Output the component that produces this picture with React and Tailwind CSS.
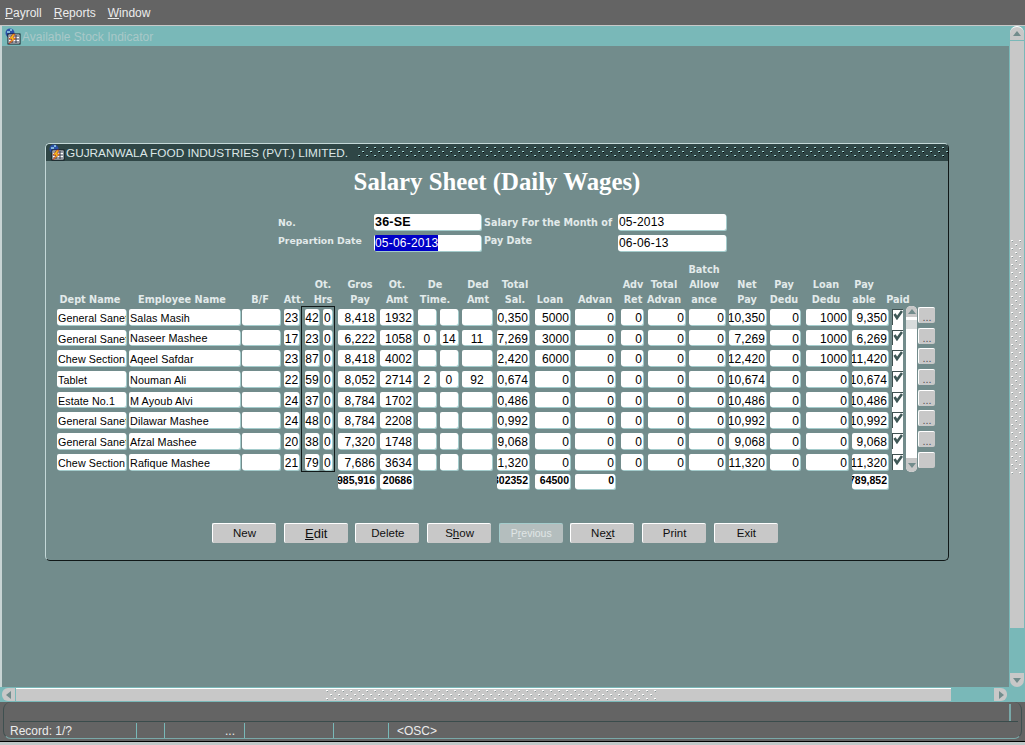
const COLS = [
  { c: "w-[69px]", a: "justify-start", t: "text-[10.7px]" },
  { c: "ml-[3px] w-[111px]", a: "justify-start", t: "text-[10.8px]" },
  { c: "ml-[2px] w-[38px]", a: "justify-start" },
  { c: "ml-[4px] w-[15px]", a: "justify-center" },
  { c: "ml-[6px] w-[14px]", a: "justify-center" },
  { c: "ml-[4px] w-[9px]", a: "justify-center" },
  { c: "ml-[6px] w-[38px]", a: "justify-end" },
  { c: "ml-[4px] w-[33px]", a: "justify-end" },
  { c: "ml-[5px] w-[18px]", a: "justify-center" },
  { c: "ml-[4px] w-[18px]", a: "justify-center" },
  { c: "ml-[4px] w-[30px]", a: "justify-center" },
  { c: "ml-[5px] w-[32px]", a: "justify-end" },
  { c: "ml-[6px] w-[35px]", a: "justify-end" },
  { c: "ml-[5px] w-[40px]", a: "justify-end" },
  { c: "ml-[6px] w-[22px]", a: "justify-end" },
  { c: "ml-[5px] w-[37px]", a: "justify-end" },
  { c: "ml-[4px] w-[36px]", a: "justify-end" },
  { c: "ml-[4px] w-[37px]", a: "justify-end" },
  { c: "ml-[4px] w-[30px]", a: "justify-end" },
  { c: "ml-[6px] w-[42px]", a: "justify-end" },
  { c: "ml-[4px] w-[36px]", a: "justify-end" },
];

const ROWS = [
  ["General Sanet", "Salas Masih", "", "23", "42", "0", "8,418", "1932", "", "", "", "0,350", "5000", "0", "0", "0", "0", "10,350", "0", "1000", "9,350"],
  ["General Sanet", "Naseer Mashee", "", "17", "23", "0", "6,222", "1058", "0", "14", "11", "7,269", "3000", "0", "0", "0", "0", "7,269", "0", "1000", "6,269"],
  ["Chew Section", "Aqeel Safdar", "", "23", "87", "0", "8,418", "4002", "", "", "", "2,420", "6000", "0", "0", "0", "0", "12,420", "0", "1000", "11,420"],
  ["Tablet", "Nouman Ali", "", "22", "59", "0", "8,052", "2714", "2", "0", "92", "0,674", "0", "0", "0", "0", "0", "10,674", "0", "0", "10,674"],
  ["Estate No.1", "M Ayoub Alvi", "", "24", "37", "0", "8,784", "1702", "", "", "", "0,486", "0", "0", "0", "0", "0", "10,486", "0", "0", "10,486"],
  ["General Sanet", "Dilawar Mashee", "", "24", "48", "0", "8,784", "2208", "", "", "", "0,992", "0", "0", "0", "0", "0", "10,992", "0", "0", "10,992"],
  ["General Sanet", "Afzal Mashee", "", "20", "38", "0", "7,320", "1748", "", "", "", "9,068", "0", "0", "0", "0", "0", "9,068", "0", "0", "9,068"],
  ["Chew Section", "Rafique Mashee", "", "21", "79", "0", "7,686", "3634", "", "", "", "1,320", "0", "0", "0", "0", "0", "11,320", "0", "0", "11,320"],
];

const TOTALS = { 6: "985,916", 7: "20686", 11: "302352", 12: "64500", 13: "0", 20: "789,852" };

const HEADERS = [
  { w: "w-[66px]", lines: ["Dept Name"] },
  { w: "w-[118px]", lines: ["Employee Name"] },
  { w: "w-[38px]", lines: ["B/F"] },
  { w: "w-[30px]", lines: ["Att."] },
  { w: "w-[28px]", lines: ["Ot.", "Hrs"] },
  { w: "w-[46px]", lines: ["Gros", "Pay"] },
  { w: "w-[28px]", lines: ["Ot.", "Amt"] },
  { w: "w-[48px]", lines: ["De", "Time."] },
  { w: "w-[38px]", lines: ["Ded", "Amt"] },
  { w: "w-[36px]", lines: ["Total", "Sal."] },
  { w: "w-[34px]", lines: ["Loan"] },
  { w: "w-[56px]", lines: ["Advan"] },
  { w: "w-[20px]", lines: ["Adv", "Ret"] },
  { w: "w-[42px]", lines: ["Total", "Advan"] },
  { w: "w-[38px]", lines: ["Batch", "Allow", "ance"] },
  { w: "w-[48px]", lines: ["Net", "Pay"] },
  { w: "w-[26px]", lines: ["Pay", "Dedu"] },
  { w: "w-[58px]", lines: ["Loan", "Dedu"] },
  { w: "w-[18px]", lines: ["Pay", "able"] },
  { w: "w-[50px]", lines: ["Paid"] },
];

const BUTTONS = [
  { label: "New" },
  { label: "Edit", u: 0, big: true },
  { label: "Delete" },
  { label: "Show", u: 1 },
  { label: "Previous", u: 1, disabled: true },
  { label: "Next", u: 2 },
  { label: "Print" },
  { label: "Exit" },
];

const LABEL = "font-['DejaVu_Sans',sans-serif] font-bold text-[#e2eaea]";
const SHADOW = "shadow-[1px_1px_0_#a4cccc]";

function Mnemonic({ text, at }) {
  if (at === undefined) return text;
  return (
    <>
      {text.slice(0, at)}
      <span className="underline">{text[at]}</span>
      {text.slice(at + 1)}
    </>
  );
}

function FormsIcon() {
  return (
    <svg width="17" height="17" viewBox="0 0 17 17" className="shrink-0">
      <circle cx="6" cy="5" r="4.5" fill="#2a4fa8" />
      <path d="M3 3h3v2H3zM6 1h2v2H6z" fill="#7fb6d8" />
      <rect x="4" y="6" width="12" height="10" fill="#fff" stroke="#101820" />
      <path d="M5 8h10M5 11h10M5 14h10M8 7v8M12 7v8" stroke="#30384a" />
      <path d="M9 6L5 11h3l-3 5 7-6H9l2-4z" fill="#f2c21c" stroke="#c0281c" strokeWidth="0.6" />
    </svg>
  );
}

// dotted grip used on the title bar and on the scrollbar thumbs
function Grip({ id, light, dark, className }) {
  return (
    <svg className={className}>
      <defs>
        <pattern id={id} width="8" height="8" patternUnits="userSpaceOnUse">
          <rect x="0" y="0" width="2" height="1" fill={light} />
          <rect x="1" y="1" width="1" height="1" fill={dark} />
          <rect x="4" y="4" width="2" height="1" fill={light} />
          <rect x="5" y="5" width="1" height="1" fill={dark} />
        </pattern>
      </defs>
      <rect width="100%" height="100%" fill={`url(#${id})`} />
    </svg>
  );
}

function Arrow({ dir, className }) {
  const points = {
    up: "1,7 5,2 9,7",
    down: "1,3 9,3 5,8",
    left: "7,1 7,9 2,5",
    right: "3,1 3,9 8,5",
  };
  return (
    <svg width="10" height="10" viewBox="0 0 10 10" className={className}>
      <polygon points={points[dir]} fill="#728c8c" />
    </svg>
  );
}

function Check() {
  return (
    <svg width="10" height="10" viewBox="0 0 10 10">
      <path d="M1.5 4L4 8L9 1" fill="none" stroke="#3f5857" strokeWidth="2.6" />
    </svg>
  );
}

function Field({ className, children, bold }) {
  return (
    <div
      className={`flex items-center overflow-hidden whitespace-nowrap rounded-[2px] bg-white px-[1px] text-black ${SHADOW} ${
        bold ? "font-bold" : ""
      } ${className}`}
    >
      {children}
    </div>
  );
}

function SalaryTable() {
  return (
    <div className="relative ml-[11px]">
      <div className="mt-[11px] flex items-end">
        {HEADERS.map((h) => (
          <div
            key={h.lines.join("")}
            className={`flex flex-col items-center whitespace-nowrap text-[9.7px] leading-[15px] ${h.w} ${LABEL}`}
          >
            {h.lines.map((line) => (
              <span key={line}>{line}</span>
            ))}
          </div>
        ))}
      </div>

      <div className="relative mt-[2px] flex items-start">
        <div className="flex flex-col gap-[5px]">
          {ROWS.map((row, r) => (
            <div key={r} className="flex h-[15.7px] text-[12px] tracking-[0.1px]">
              {row.map((value, i) => (
                <Field key={i} className={`pt-[2px] ${COLS[i].c} ${COLS[i].a} ${COLS[i].t || ""}`}>
                  {value}
                </Field>
              ))}
              <div
                className={`ml-[4px] flex w-[11px] items-start justify-center border-l border-t border-[#3f5050] bg-white ${
                  r < 7 ? "shadow-[0_5px_0_#fff]" : ""
                }`}
              >
                <Check />
              </div>
            </div>
          ))}
        </div>

        <div className="ml-[3px] -mt-[3px] flex h-[166px] w-[11px] flex-col justify-between rounded-[5px] bg-white">
          <div className="flex h-[11px] items-center justify-center rounded-t-[5px] bg-[#c8c8c8]">
            <Arrow dir="up" />
          </div>
          <div className="mb-auto mt-[3px] h-[9px] bg-[#d8dcdc]" />
          <div className="flex h-[14px] items-center justify-center rounded-b-[5px] bg-[#c8c8c8]">
            <Arrow dir="down" />
          </div>
        </div>

        <div className="ml-[1px] -mt-[2px] flex flex-col gap-[4.7px]">
          {ROWS.map((_, i) => (
            <div
              key={i}
              className="flex h-[16px] w-[17px] items-end justify-center rounded-[2px] border-l border-t border-white bg-[#c8c8c8] text-[11px] leading-[12px] text-[#555]"
            >
              {i < 7 ? "..." : ""}
            </div>
          ))}
        </div>

        <div className="absolute -top-[3px] left-[244px] h-[166px] w-[34px] border border-[#101818]" />
      </div>

      <div className="mt-[1.6px] flex h-[15px] text-[10.5px]">
        {COLS.map((col, i) =>
          TOTALS[i] ? (
            <Field key={i} bold className={`${col.c} justify-end`}>
              {TOTALS[i]}
            </Field>
          ) : (
            <div key={i} className={col.c} />
          ),
        )}
      </div>
    </div>
  );
}

function FormWindow() {
  return (
    <div className="ml-[43px] mt-[97px] flex h-[418px] w-[904px] flex-col rounded-[5px] border border-b-[#101818] border-l-[#c4d8d8] border-r-[#101818] border-t-[#c4d8d8]">
      <div className="flex h-[17px] shrink-0 items-center rounded-t-[4px] bg-[#2f4646] pl-[2px]">
        <FormsIcon />
        <span className="ml-[1px] whitespace-nowrap pt-[3px] text-[11.8px] text-[#dce6e6]">
          GUJRANWALA FOOD INDUSTRIES (PVT.) LIMITED.
        </span>
        <Grip id="title-grip" light="#9fd0d0" dark="#000" className="ml-[10px] h-[11px] min-w-0 flex-1" />
      </div>

      <h1 className="mt-[1px] h-[40px] text-center font-['Liberation_Serif',serif] text-[24.8px] font-bold leading-[40px] text-white">
        Salary Sheet (Daily Wages)
      </h1>

      <div className="ml-[232px] mt-[12px] flex gap-[5px] text-[12px] tracking-[0.2px]">
        <div className={`flex w-[91px] flex-col gap-[4px] whitespace-nowrap text-[9.3px] tracking-normal ${LABEL}`}>
          <span className="h-[16px] leading-[18px]">No.</span>
          <span className="h-[16px] leading-[14px]">Prepartion Date</span>
        </div>
        <div className="flex w-[107px] flex-col gap-[5px]">
          <Field bold className="h-[16px] text-[12.5px]">
            36-SE
          </Field>
          <Field className="h-[16px]">
            <span className="bg-[#0000c8] text-white">05-06-2013</span>
          </Field>
        </div>
        <div className={`-ml-[2px] flex w-[129px] flex-col gap-[4px] whitespace-nowrap text-[9.6px] tracking-normal ${LABEL}`}>
          <span className="h-[16px] leading-[18px]">Salary For the Month of</span>
          <span className="h-[16px] leading-[14px]">Pay Date</span>
        </div>
        <div className="flex w-[108px] flex-col gap-[5px]">
          <Field className="h-[16px]">05-2013</Field>
          <Field className="h-[16px]">06-06-13</Field>
        </div>
      </div>

      <SalaryTable />

      <div className="ml-[166px] mt-[34.4px] flex gap-[7.7px] text-[11.5px]">
        {BUTTONS.map((b) => (
          <div
            key={b.label}
            className={`flex h-[20px] w-[64px] items-center justify-center rounded-[2px] border-l border-t ${
              b.disabled
                ? "border-[#a4cccc] bg-[#b4bebe] text-[10.5px] text-[#e0e6e6]"
                : "border-white bg-[#c8c8c8] text-[#101010]"
            } ${b.big ? "text-[13px]" : ""}`}
          >
            <span>
              <Mnemonic text={b.label} at={b.u} />
            </span>
          </div>
        ))}
      </div>
    </div>
  );
}

function VerticalScrollbar() {
  return (
    <div className="flex w-[16px] flex-col bg-[#79b8b8] pl-[1px] pr-[1px]">
      <div className="flex h-[14px] items-center justify-center rounded-t-[7px] border-t border-white bg-[#c8c8c8]">
        <Arrow dir="up" />
      </div>
      <div className="mt-[1px] flex h-[587px] flex-col bg-[#c8c8c8] pt-[199px]">
        <Grip id="v-grip" light="#fff" dark="#8a9a9a" className="ml-[1px] h-[236px] w-[12px]" />
      </div>
      <div className="mt-auto flex h-[14px] items-center justify-center rounded-b-[7px] bg-[#c8c8c8]">
        <Arrow dir="down" />
      </div>
    </div>
  );
}

function HorizontalScrollbar() {
  return (
    <div className="flex h-[15px] shrink-0 items-center bg-[#79b8b8] pl-[2px]">
      <div className="flex h-[13px] w-[13px] items-center justify-center rounded-l-[6px] bg-[#c8c8c8]">
        <Arrow dir="left" />
      </div>
      <div className="ml-[1px] flex h-[13px] w-[935px] items-center border-t border-white bg-[#c8c8c8] pl-[310px]">
        <Grip id="h-grip" light="#fff" dark="#8a9a9a" className="h-[11px] w-[330px]" />
      </div>
      <div className="ml-auto mr-[18px] flex h-[13px] w-[13px] items-center justify-center rounded-r-[6px] bg-[#c8c8c8]">
        <Arrow dir="right" />
      </div>
    </div>
  );
}

function StatusBar() {
  return (
    <div className="flex h-[43px] shrink-0 flex-col border-b-[3px] border-[#c0c8c8] bg-[#646464]">
      <div className="mx-[3px] flex h-[37px] flex-col rounded-[8px] border-b border-l border-r border-b-[#79a8a8] border-l-[#3f5050] border-r-[#3f5050]">
        <div className="ml-[6px] mr-[3px] flex h-[20px] shrink-0 justify-end border-b border-[#3a4c4c] pr-[2px]">
          <div className="mr-[5px] mt-[2px] w-[2px] bg-[#79a8a8]" />
        </div>
        <div className="flex min-h-0 flex-1 items-center pt-[1px] text-[12px] text-[#ececec]">
          <div className="h-full w-[132px] pl-[6px] leading-[16px]">Record: 1/?</div>
          <div className="h-full w-[28px] border-l border-[#79b8b8]" />
          <div className="h-full w-[80px] border-l border-[#79b8b8] pr-[9px] text-right leading-[16px]">...</div>
          <div className="h-full w-[89px] border-l border-[#79b8b8]" />
          <div className="h-full w-[55px] border-l border-[#79b8b8]" />
          <div className="h-full border-l border-[#79b8b8] pl-[8px] leading-[16px]">&lt;OSC&gt;</div>
        </div>
      </div>
      <div className="mt-auto h-[1px] bg-black" />
    </div>
  );
}

export default function App() {
  return (
    <div className="flex h-[745px] w-[1025px] flex-col overflow-hidden bg-[#728c8c] font-['Liberation_Sans',sans-serif]">
      <div className="flex h-[25px] shrink-0 items-center gap-[12px] bg-[#646464] pl-[5px] text-[12px] text-[#ececec]">
        <span>
          <Mnemonic text="Payroll" at={0} />
        </span>
        <span>
          <Mnemonic text="Reports" at={0} />
        </span>
        <span>
          <Mnemonic text="Window" at={0} />
        </span>
      </div>

      <div className="flex h-[662px] shrink-0 border-t border-[#c8c8c8]">
        <div className="flex min-w-0 flex-1 flex-col border-l-2 border-[#c8d4d4]">
          <div className="flex h-[20px] shrink-0 items-center gap-[1px] bg-[#79b8b8] pl-[2px] text-[12px] text-[#a9c8c8]">
            <FormsIcon />
            <span className="pt-[2px]">Available Stock Indicator</span>
          </div>
          <FormWindow />
        </div>
        <VerticalScrollbar />
      </div>

      <HorizontalScrollbar />
      <StatusBar />
    </div>
  );
}
